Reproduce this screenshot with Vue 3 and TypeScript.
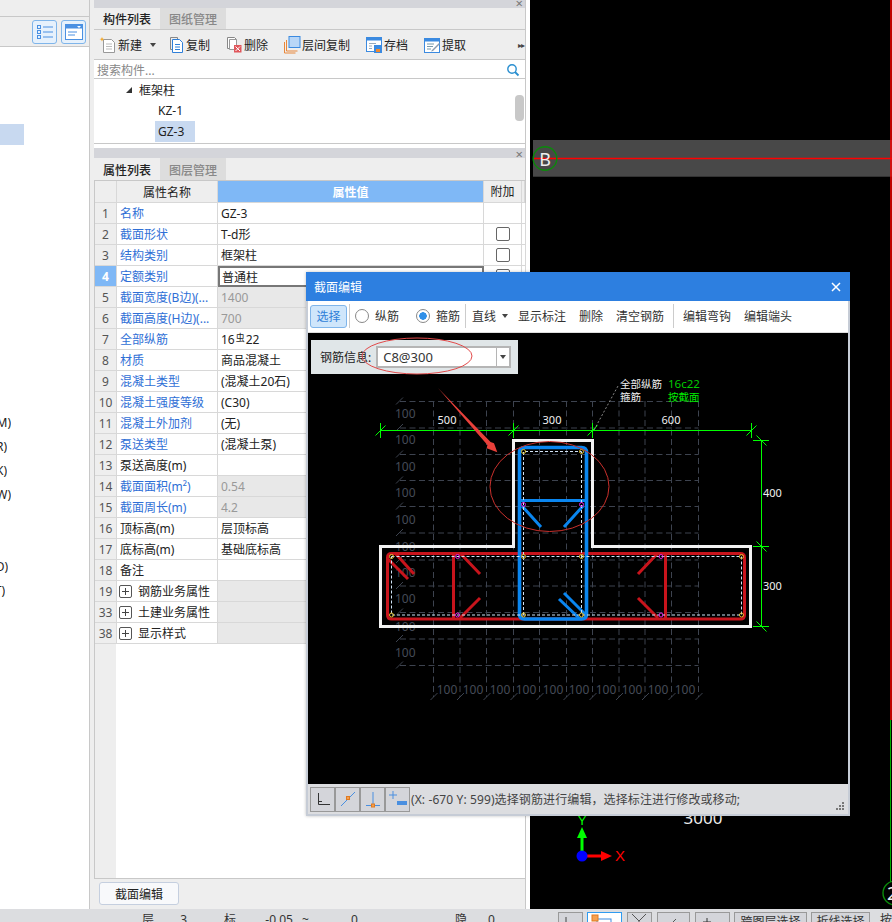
<template>
  <div class="app">
    <div class="main">
      <!-- left tree, almost all cut off by the screenshot -->
      <aside class="left">
        <div class="left-top"></div>
        <div class="left-tools">
          <button class="view-btn">
            <svg width="18" height="16" viewBox="0 0 18 16"><g fill="none" stroke="#4a90e2"><rect x="1.5" y="1.5" width="3" height="3" /><rect x="1.5" y="6.5" width="3" height="3" /><rect x="1.5" y="11.5" width="3" height="3" /><path d="M7 3h10M7 8h10M7 13h10" /></g></svg>
          </button>
          <button class="view-btn">
            <svg width="18" height="16" viewBox="0 0 18 16"><rect x=".5" y=".5" width="17" height="15" fill="#fff" stroke="#4a90e2" /><rect x=".5" y=".5" width="17" height="4" fill="#4a90e2" /><path d="M3 8h9M3 11h7" stroke="#4a90e2" /><path d="M12 2l2 2 2-2" fill="#fff" /></svg>
          </button>
        </div>
        <div class="left-body">
          <div class="left-sel"></div>
          <div class="frags">
            <div v-for="(f, i) in fragments" :key="i" class="frag" :style="{ width: f.end + 'px' }">{{ f.text }}</div>
          </div>
        </div>
      </aside>

      <section class="mid">
        <div class="grip">×</div>
        <div class="tabs">
          <div class="tab on">构件列表</div>
          <div class="tab">图纸管理</div>
        </div>
        <div class="tools">
          <div class="tool tool-new">
            <svg width="18" height="18" viewBox="0 0 18 18"><path d="M4.5 3.5h8l3 3v10h-11z" fill="#fff" stroke="#999" /><path d="M7 8h6M7 10.5h6M7 13h6" stroke="#bbb" /><path d="M3 1l.8 1.7L5.500 3l-1.700.8L3 5.500 2.200 3.800.5 3l1.700-.3z" fill="#f5a623" /></svg>
            <span>新建</span>
            <i class="caret"></i>
          </div>
          <div class="tool">
            <svg width="18" height="18" viewBox="0 0 18 18"><path d="M3.500 1.500h7v2" fill="none" stroke="#888" /><path d="M3.500 1.500v12h2" fill="none" stroke="#888" /><path d="M5.500 3.500h7l3 3v10h-10z" fill="#fff" stroke="#2f7fd8" /><path d="M8 8.500h5M8 11h5M8 13.500h5" stroke="#2f7fd8" /></svg>
            <span>复制</span>
          </div>
          <div class="tool">
            <svg width="18" height="18" viewBox="0 0 18 18"><path d="M2.500 1.500h7l2 2v9h-9z" fill="#fff" stroke="#888" /><path d="M4.500 3.500h7v10h-7z" fill="#fff" stroke="#999" /><rect x="9" y="9" width="7.500" height="7.500" fill="#e0565b" /><path d="M10.500 10.500l4.500 4.500M15 10.500l-4.500 4.500" stroke="#fff" /></svg>
            <span>删除</span>
          </div>
          <div class="tool">
            <svg width="18" height="18" viewBox="0 0 18 18"><path d="M1.500 6v11h11M3.500 4v11h11" fill="none" stroke="#e8873a" /><rect x="6" y=".5" width="11" height="11" fill="#b8d6f7" stroke="#3b8ae0" /></svg>
            <span>层间复制</span>
          </div>
          <div class="tool">
            <svg width="18" height="18" viewBox="0 0 18 18"><rect x="1.500" y="1.500" width="15" height="14" fill="#fff" stroke="#3b8ae0" /><rect x="1.500" y="1.500" width="15" height="3" fill="#3b8ae0" /><path d="M4 7.500h7M4 10h3M4 12.500h3" stroke="#9ab" /><rect x="9" y="9" width="8" height="8" fill="#3b8ae0" /><rect x="11" y="13" width="4" height="3" fill="#f08a30" /></svg>
            <span>存档</span>
          </div>
          <div class="tool">
            <svg width="18" height="18" viewBox="0 0 18 18"><rect x="1.500" y="2.500" width="15" height="14" fill="#fff" stroke="#3b8ae0" /><rect x="1.500" y="2.500" width="15" height="3" fill="#3b8ae0" /><path d="M4 8h7M4 10.500h6M4 13h4" stroke="#79a" /><path d="M9 14l7-7 1 1-7 7-2 .5z" fill="#8a9bb0" /></svg>
            <span>提取</span>
          </div>
          <div class="more">▸▸</div>
        </div>
        <div class="search">
          <span>搜索构件...</span>
          <svg width="14" height="14" viewBox="0 0 14 14"><circle cx="6" cy="6" r="4.200" fill="none" stroke="#2a8fd0" stroke-width="1.400" /><path d="M9 9l3.500 3.500" stroke="#2a8fd0" stroke-width="1.800" /></svg>
        </div>
        <div class="tree">
          <div class="tree-row tree-root"><i class="tri"></i>框架柱</div>
          <div class="tree-row tree-leaf"><span>KZ-1</span></div>
          <div class="tree-row tree-leaf"><span class="picked">GZ-3</span></div>
          <div class="thumb"></div>
        </div>

        <div class="split"></div>

        <div class="grip grip-2">×</div>
        <div class="tabs tabs-2">
          <div class="tab on">属性列表</div>
          <div class="tab">图层管理</div>
        </div>
        <div class="table">
          <div class="row head">
            <div class="c-no"></div>
            <div class="c-name">属性名称</div>
            <div class="c-val">属性值</div>
            <div class="c-add">附加</div>
            <div class="c-end"></div>
          </div>
          <div v-for="r in rows" :key="r.no" class="row">
            <div class="c-no" :class="{ 'no-on': r.no === 4 }">{{ r.no }}</div>
            <div class="c-name" :class="{ link: r.link, group: r.group }">
              <i v-if="r.group" class="plus"></i>
              <span class="ellip">{{ r.name }}</span>
            </div>
            <div class="c-val" :class="{ shaded: r.shaded, editing: r.no === 4 }">
              <template v-if="r.no === 7">16<small class="rebar">虫</small>22</template>
              <template v-else>{{ r.value }}</template>
            </div>
            <div class="c-add" :class="{ shaded: r.group }"><i v-if="r.check" class="check"></i></div>
            <div class="c-end"></div>
          </div>
          <div class="filler"><div class="filler-no"></div></div>
        </div>
        <div class="foot">
          <button class="foot-btn">截面编辑</button>
        </div>
      </section>

      <div class="gutter"></div>

      <!-- main drawing, a free canvas -->
      <div class="viewport">
        <svg class="fill" viewBox="530 0 362 909">
          <rect x="533" y="140" width="359" height="37" fill="#484848" />
          <rect x="533" y="176" width="359" height="1" fill="#333" />
          <path d="M533 158.500H892" stroke="#f00" stroke-width="1.500" />
          <path d="M891 0V720" stroke="#f00" stroke-width="1.500" />
          <path d="M890.500 720V882" stroke="#0a0" stroke-width="1" />
          <circle cx="545" cy="158.500" r="11.800" fill="none" stroke="#0a8a0a" stroke-width="1.400" />
          <text x="545" y="165.500" class="cad-b" text-anchor="middle">B</text>
          <circle cx="895" cy="893" r="12" fill="none" stroke="#0a8a0a" stroke-width="1.400" />
          <text x="887" y="900" class="cad-b">2</text>
          <text x="703" y="824" class="cad-big" text-anchor="middle">3000</text>
          <path d="M582 856V836" stroke="#0f0" stroke-width="3" />
          <path d="M582 827l5 11h-10z" fill="#0f0" />
          <text x="582" y="825" class="cad-y" text-anchor="middle">Y</text>
          <path d="M586 856h16" stroke="#f00" stroke-width="3" />
          <path d="M612 856l-11 5v-10z" fill="#f00" />
          <circle cx="582" cy="856" r="5.500" fill="#00f" />
          <text x="615" y="861" class="cad-x">X</text>
        </svg>
      </div>
    </div>

    <div class="status">
      <span class="st-a">层高:</span><span class="st-b">3</span>
      <span class="st-c">标高:</span><span class="st-d">-0.05 ~ 2.95</span><span class="st-e">0</span>
      <span class="st-f">隐藏:</span><span class="st-g">0</span>
      <button class="st-btn st-s1"><svg width="20" height="14" viewBox="0 0 20 14"><path d="M6 4v10M6 13h10" stroke="#444" fill="none" /></svg></button>
      <button class="st-btn st-s2 st-on"><svg width="30" height="14" viewBox="0 0 30 14"><rect x="8" y="6" width="14" height="10" fill="none" stroke="#3b8ae0" /><rect x="3" y="2" width="6" height="6" fill="#f5a050" stroke="#e07a20" /></svg></button>
      <button class="st-btn st-s3"><svg width="20" height="14" viewBox="0 0 20 14"><path d="M3 1l7 7 7-7M10 8v6" stroke="#555" fill="none" /></svg></button>
      <button class="st-btn st-s4"><svg width="30" height="14" viewBox="0 0 30 14"><path d="M12 12l6-6" stroke="#555" /></svg></button>
      <button class="st-btn st-s4b"><svg width="30" height="14" viewBox="0 0 30 14"><path d="M10 5v8M6 9h8" stroke="#333" /></svg></button>
      <button class="st-btn st-t1">跨图层选择</button>
      <button class="st-btn st-t2">折线选择</button>
      <span class="st-h">按</span>
    </div>

    <!-- section editor window, floating over everything -->
    <div class="dlg">
      <div class="dlg-title">
        <span>截面编辑</span>
        <svg width="10" height="10" viewBox="0 0 10 10"><path d="M1 1l8 8M9 1l-8 8" stroke="#fff" stroke-width="1.500" /></svg>
      </div>
      <div class="dlg-in">
        <div class="dlg-tools">
          <button class="sel-btn">选择</button>
          <i class="sep"></i>
          <label class="radio r1"><i class="dot"></i>纵筋</label>
          <label class="radio r2"><i class="dot dot-on"></i>箍筋</label>
          <i class="sep sep-2"></i>
          <span class="dt dt-line">直线<i class="caret"></i></span>
          <span class="dt">显示标注</span>
          <span class="dt">删除</span>
          <span class="dt">清空钢筋</span>
          <i class="sep sep-3"></i>
          <span class="dt">编辑弯钩</span>
          <span class="dt">编辑端头</span>
        </div>
        <div class="sec">
          <div class="rebar-info">
            <span class="ri-label">钢筋信息:</span>
            <div class="ri-input">C8@300</div>
            <div class="ri-arrow"><i class="caret"></i></div>
          </div>
          <svg class="fill" viewBox="308 333 540 451">
            <!-- grid -->
            <g stroke="#3d434f" stroke-dasharray="6 3.500" fill="none">
              <path v-for="y in gridY" :key="'h' + y" :d="`M400 ${y}H698.500`" />
              <path v-for="x in gridX" :key="'v' + x" :d="`M${x} 401V697`" />
            </g>
            <g stroke="#3d434f" fill="none">
              <path v-for="y in gridY" :key="'t' + y" :d="`M396 ${y + 3}l7-7`" />
              <path v-for="x in gridX" :key="'b' + x" :d="`M${x - 3} 700l7-7`" />
            </g>
            <g class="cad-grid">
              <text v-for="y in labelY" :key="'ly' + y" x="395" :y="y + 4">100</text>
              <text v-for="x in labelX" :key="'lx' + x" :x="x" y="694" text-anchor="middle">100</text>
            </g>

            <!-- dimensions -->
            <g stroke="#0f0" fill="none">
              <path d="M380.500 430.500H752" />
              <path d="M380.500 423V438M513.500 423V438M592.500 423V438M751.500 423V438" />
              <path d="M375.500 435.500l10-10M508.500 435.500l10-10M587.500 435.500l10-10M746.500 435.500l10-10" />
              <path d="M761.500 440V627" />
              <path d="M753 440.500H769M753 546.500H769M753 626.500H769" />
              <path d="M756.500 435.500l10 10M756.500 541.500l10 10M756.500 621.500l10 10" />
            </g>
            <g class="cad-dim">
              <text x="447" y="424" text-anchor="middle">500</text>
              <text x="552" y="424" text-anchor="middle">300</text>
              <text x="671" y="424" text-anchor="middle">600</text>
              <text x="763" y="497">400</text>
              <text x="763" y="590">300</text>
            </g>
            <path d="M594 430L618 386" stroke="#888" stroke-dasharray="2 2" fill="none" />
            <g class="cad-note">
              <text x="620" y="388" fill="#eee">全部纵筋</text>
              <text x="620" y="401" fill="#eee">箍筋</text>
              <text x="668" y="388" fill="#0c0" class="cad-code">16c22</text>
              <text x="668" y="401" fill="#0e0">按截面</text>
            </g>

            <!-- section outline -->
            <path d="M513.500 440.500H592.500V546.500H750.500V626.500H380.500V546.500H513.500Z" fill="none" stroke="#f2f2f2" stroke-width="3" />

            <!-- rebar -->
            <g stroke="#c8141c" stroke-width="3" fill="none">
              <path d="M391.500 553.500H740.500Q744.500 553.500 744.500 557.500V615Q744.500 619 740.500 619H391.500Q387.500 619 387.500 615V557.500Q387.500 553.500 391.500 553.500Z" />
              <path d="M453.500 553.500V619M665.500 553.500V619" />
              <path d="M388 559l20 20M395 553l19 21M460 553l20 21M460 618l20-20M658 553l-20 21M658 618l-20-20" />
            </g>
            <g stroke="#0a86f0" stroke-width="3" fill="none">
              <path d="M524.500 447.500H581.500Q586.500 447.500 586.500 452.500V614Q586.500 619 581.500 619H524.500Q519.500 619 519.500 614V452.500Q519.500 447.500 524.500 447.500Z" stroke-width="3.600" />
              <path d="M519.500 500.500H586.500" />
              <path d="M522 506l19 21M583 506l-19 21M564 593l21 21M559 599l21 20" />
            </g>
            <g stroke="#cfe2f5" stroke-dasharray="3 2" fill="none">
              <path d="M391.500 556.500H741.500V615H391.500Z" />
              <path d="M523.500 615V451.500H581.500V615" />
            </g>
            <g fill="none" stroke="#e0c030" stroke-width="1">
              <circle v-for="p in yellowPts" :key="p.join()" :cx="p[0]" :cy="p[1]" r="2" />
            </g>
            <g fill="none" stroke="#e020e0" stroke-width="1">
              <circle v-for="p in pinkPts" :key="p.join()" :cx="p[0]" :cy="p[1]" r="2" />
            </g>

            <!-- markup somebody drew on the screenshot -->
            <ellipse cx="549.500" cy="486.500" rx="59.500" ry="45" fill="none" stroke="#c9302c" />
            <ellipse cx="417" cy="356" rx="55" ry="18" fill="none" stroke="#e24a4a" />
            <path d="M438 388L490.600 441.900L494 443.300L497.300 452.300L486.700 448.300L487.400 445.100Z" fill="#e8403a" />
          </svg>
        </div>
        <div class="dlg-status">
          <button class="ds-btn"><svg width="18" height="18" viewBox="0 0 18 18"><path d="M4.500 3v11.500H16M4.500 11.500H8" fill="none" stroke="#333" /></svg></button>
          <button class="ds-btn"><svg width="18" height="18" viewBox="0 0 18 18"><path d="M2 16L16 2" stroke="#4a8fe0" /><rect x="7.500" y="6.500" width="3" height="3" fill="#f5a050" stroke="#e07a20" /></svg></button>
          <button class="ds-btn"><svg width="18" height="18" viewBox="0 0 18 18"><path d="M9 2v14M2 15.500h14" stroke="#4a8fe0" /><rect x="7.500" y="14" width="3" height="3" fill="#f5a050" stroke="#e07a20" /></svg></button>
          <button class="ds-btn"><svg width="20" height="18" viewBox="0 0 20 18"><path d="M5 1v8M1 5h8" stroke="#4a8fe0" /><rect x="9" y="11" width="10" height="4" fill="#4a8fe0" /></svg></button>
          <span class="ds-text">(X: -670 Y: 599)选择钢筋进行编辑，选择标注进行修改或移动;</span>
          <svg class="ds-grip" width="10" height="10" viewBox="0 0 10 10"><path d="M7 1h2v2H7zM4 4h2v2H4zM7 4h2v2H7zM1 7h2v2H1zM4 7h2v2H4zM7 7h2v2H7z" fill="#777" /></svg>
        </div>
      </div>
    </div>
  </div>
</template>

<script setup lang="ts">
interface PropRow {
  no: number
  name: string
  value?: string
  link?: boolean
  shaded?: boolean
  check?: boolean
  group?: boolean
}

const fragments = [
  { text: '(GM)', end: 11 },
  { text: '(GR)', end: 7 },
  { text: '(GK)', end: 7 },
  { text: '(GW)', end: 11 },
  { text: '', end: 0 },
  { text: '', end: 0 },
  { text: '(GD)', end: 8 },
  { text: '(GT)', end: 5 },
]

const rows: PropRow[] = [
  { no: 1, name: '名称', value: 'GZ-3', link: true },
  { no: 2, name: '截面形状', value: 'T-d形', link: true, check: true },
  { no: 3, name: '结构类别', value: '框架柱', link: true, check: true },
  { no: 4, name: '定额类别', value: '普通柱', link: true, check: true },
  { no: 5, name: '截面宽度(B边)(...', value: '1400', link: true, shaded: true },
  { no: 6, name: '截面高度(H边)(...', value: '700', link: true, shaded: true },
  { no: 7, name: '全部纵筋', link: true },
  { no: 8, name: '材质', value: '商品混凝土', link: true },
  { no: 9, name: '混凝土类型', value: '(混凝土20石)', link: true },
  { no: 10, name: '混凝土强度等级', value: '(C30)', link: true },
  { no: 11, name: '混凝土外加剂', value: '(无)', link: true },
  { no: 12, name: '泵送类型', value: '(混凝土泵)', link: true },
  { no: 13, name: '泵送高度(m)' },
  { no: 14, name: '截面面积(m²)', value: '0.54', link: true, shaded: true },
  { no: 15, name: '截面周长(m)', value: '4.2', link: true, shaded: true },
  { no: 16, name: '顶标高(m)', value: '层顶标高' },
  { no: 17, name: '底标高(m)', value: '基础底标高' },
  { no: 18, name: '备注' },
  { no: 19, name: '钢筋业务属性', group: true, shaded: true },
  { no: 33, name: '土建业务属性', group: true, shaded: true },
  { no: 38, name: '显示样式', group: true, shaded: true },
]

const gridY = [401.5, 428, 454.5, 480.5, 506.5, 533, 560, 586, 612.5, 639, 665.5]
const gridX = [433.5, 460, 486.5, 513.5, 539.5, 566.5, 592.5, 619, 645, 671.5, 698.5]
const labelY = [414, 440, 467, 493, 520, 547, 573, 599, 627, 653]
const labelX = [447, 473, 500, 526, 553, 579, 606, 632, 658, 685]

const yellowPts = [
  [391.5, 556.5], [391.5, 615], [523.5, 451.5], [581.5, 451.5], [523.5, 556.5],
  [581.5, 556.5], [523.5, 615], [581.5, 615], [741.5, 556.5], [741.5, 615],
]
const pinkPts = [
  [457.5, 556.5], [457.5, 615], [523.5, 504.5], [581.5, 504.5], [661, 556.5], [661, 615],
]
</script>

<style>
body {
  margin: 0;
  background: #fff;
}
</style>

<style scoped>
.app {
  position: relative;
  width: 892px;
  height: 922px;
  overflow: hidden;
  display: flex;
  flex-direction: column;
  background: #eee;
  color: #222;
  font: 12px "Noto Sans", "Noto Sans CJK SC", sans-serif;
}
.app i { font-style: normal; }
button {
  font: inherit;
  color: inherit;
  padding: 0;
  box-sizing: border-box;
}
.main {
  flex: 1;
  min-height: 0;
  display: flex;
}

/* left */
.left {
  width: 90px;
  margin-right: 4px;
  box-sizing: border-box;
  border-right: 1px solid #c8c8c8;
  display: flex;
  flex-direction: column;
}
.left-top {
  height: 16px;
  border-bottom: 1px solid #c8c8c8;
}
.left-tools {
  height: 29px;
  border-bottom: 1px solid #c8c8c8;
  display: flex;
  align-items: center;
  gap: 4px;
  padding-left: 32px;
}
.view-btn {
  width: 25px;
  height: 24px;
  display: flex;
  align-items: center;
  justify-content: center;
  background: #e6f1fc;
  border: 1px solid #7fb5ea;
  border-radius: 3px;
}
.left-body {
  flex: 1;
  background: #fff;
  padding-top: 77px;
}
.left-sel {
  width: 24px;
  height: 21px;
  background: #c8d9f0;
}
.frags {
  margin-top: 266px;
}
.frag {
  height: 24px;
  line-height: 24px;
  display: flex;
  justify-content: flex-end;
  overflow: hidden;
  white-space: nowrap;
}

/* middle */
.mid {
  width: 432px;
  box-sizing: border-box;
  border-right: 1px solid #c8c8c8;
  display: flex;
  flex-direction: column;
}
.grip {
  height: 8px;
  flex: none;
  background: #d4d5da;
  color: #777;
  font-size: 13px;
  line-height: 6px;
  text-align: right;
  padding-right: 2px;
}
.grip-2 {
  height: 10px;
  line-height: 12px;
}
.tabs {
  height: 22px;
  flex: none;
  box-sizing: border-box;
  display: flex;
  border-bottom: 1px solid #c8c8c8;
  background: #eee;
}
.tabs-2 {
  height: 23px;
}
.tabs-2 .tab {
  padding-top: 2px;
  box-sizing: border-box;
}
.tab {
  width: 66px;
  display: flex;
  align-items: center;
  justify-content: center;
  color: #888;
  font-weight: 500;
  background: #ddd;
}
.tab.on {
  color: #222;
  background: #eee;
}
.tools {
  height: 30px;
  flex: none;
  box-sizing: border-box;
  border-bottom: 1px solid #c8c8c8;
  display: flex;
  align-items: center;
  gap: 15px;
  padding-left: 5px;
  position: relative;
}
.tool {
  display: flex;
  align-items: center;
  gap: 1px;
}
.tool-new {
  margin-right: -4px;
}
.tool-new .caret {
  margin-left: 7px;
}
.caret {
  display: inline-block;
  border: 3px solid transparent;
  border-top: 4px solid #444;
  border-bottom: 0;
}
.more {
  margin-left: auto;
  margin-right: 1px;
  font-size: 8px;
  letter-spacing: -1px;
  color: #444;
}
.search {
  height: 19px;
  flex: none;
  box-sizing: border-box;
  background: #fff;
  border-bottom: 1px solid #c8c8c8;
  display: flex;
  align-items: center;
  justify-content: space-between;
  padding: 1px 5px 0 3px;
  color: #888;
}
.tree {
  height: 65px;
  flex: none;
  box-sizing: border-box;
  background: #fff;
  border-bottom: 1px solid #c8c8c8;
  position: relative;
}
.tree-row {
  height: 21px;
  display: flex;
  align-items: center;
}
.tree-root {
  padding-left: 32px;
}
.tri {
  width: 0;
  height: 0;
  margin-right: 7px;
  border-left: 6px solid transparent;
  border-bottom: 6px solid #333;
}
.tree-leaf {
  padding-left: 61px;
}
.tree-leaf span {
  padding: 0 3px;
  line-height: 21px;
}
.picked {
  width: 34px;
  background: #c8d9f0;
}
.thumb {
  position: absolute;
  left: 421px;
  top: 16px;
  width: 9px;
  height: 26px;
  border-radius: 4px;
  background: #c8c8c8;
}
.split {
  height: 4px;
  flex: none;
  background: #fff;
}

/* property table */
.table {
  flex: 1;
  min-height: 0;
  display: flex;
  flex-direction: column;
  background: #fff;
  border-left: 1px solid #c8c8c8;
  border-bottom: 1px solid #c8c8c8;
}
.row {
  height: 21px;
  flex: none;
  display: grid;
  grid-template-columns: 22px 101px 266px 38px 3px;
}
.row > div {
  box-sizing: border-box;
  border-right: 1px solid #d8d8d8;
  border-bottom: 1px solid #d8d8d8;
  line-height: 22px;
  padding-left: 3px;
  white-space: nowrap;
  overflow: hidden;
}
.head {
  height: 22px;
}
.head > div {
  text-align: center;
  padding-left: 0 !important;
  background: #eee;
  line-height: 23px !important;
}
.head .c-no {
  background: #eef0f5;
}
.head .c-val {
  background: #7fb8f6;
  color: #fff;
  font-weight: 700;
}
.row > .c-no {
  padding-left: 0;
  text-align: center;
  background: #eee;
  color: #555;
}
.row > .no-on {
  background: #7fb8f6;
  color: #fff;
  font-weight: 700;
}
.link {
  color: #2f6fd6;
}
.group {
  display: flex;
  align-items: center;
  padding-left: 2px !important;
}
.group .ellip {
  padding-top: 2px;
}
.plus {
  flex: none;
  box-sizing: border-box;
  width: 13px;
  height: 13px;
  margin-right: 6px;
  border: 1px solid #555;
  border-radius: 2px;
  background:
    linear-gradient(#444, #444) center / 7px 1px no-repeat,
    linear-gradient(#444, #444) center / 1px 7px no-repeat;
}
.row > .shaded {
  background: #e8e8e8;
  color: #999;
}
.row > .editing {
  border: 2px solid #777;
  line-height: 19px;
  padding-left: 2px;
}
.rebar {
  font-size: 9px;
  position: relative;
  top: -3px;
  margin: 0 1px;
}
.c-add {
  display: flex;
  align-items: center;
  justify-content: center;
  padding-left: 0 !important;
}
.check {
  box-sizing: border-box;
  width: 14px;
  height: 14px;
  border: 1px solid #666;
  border-radius: 2px;
  background: #fff;
}
.filler {
  flex: 1;
}
.filler-no {
  width: 21px;
  height: 100%;
  background: #eee;
}
.foot {
  height: 30px;
  flex: none;
  padding: 3px 5px;
  box-sizing: border-box;
}
.foot-btn {
  width: 80px;
  height: 23px;
  background: #f8f9fb;
  border: 1px solid #c5cfdf;
  border-radius: 3px;
}
.gutter {
  width: 4px;
  background: #fff;
}
.viewport {
  flex: 1;
  position: relative;
  background: #000;
}
.fill {
  position: absolute;
  inset: 0;
  width: 100%;
  height: 100%;
  display: block;
}
.cad-b {
  fill: #eee;
  font: 18px "Noto Sans", sans-serif;
}
.cad-big {
  fill: #eee;
  font: 17px "Noto Sans", sans-serif;
}
.cad-y {
  fill: #0f0;
  font: 13px "Liberation Sans", sans-serif;
}
.cad-x {
  fill: #f00;
  font: 15px "Liberation Sans", sans-serif;
}

/* status bar, cut by the window edge */
.status {
  height: 13px;
  flex: none;
  position: relative;
  display: flex;
  background: #dcdde0;
  overflow: hidden;
  color: #333;
  padding-top: 3px;
  box-sizing: border-box;
  line-height: 16px;
  align-items: flex-start;
}
.st-a { margin-left: 142px; }
.st-b { margin-left: 17px; }
.st-c { margin-left: 37px; }
.st-d { margin-left: 20px; word-spacing: 6px; }
.st-e { margin-left: 26px; }
.st-f { margin-left: 97px; }
.st-g { margin-left: 12px; }
.st-btn {
  flex: none;
  height: 24px;
  margin-left: 4px;
  background: #d4d5da;
  border: 1px solid #999;
  display: flex;
  justify-content: center;
  line-height: 18px;
}
.st-s1 { width: 25px; margin-left: 63px; }
.st-s2 { width: 35px; }
.st-s3 { width: 25px; margin-left: 5px; }
.st-s4 { width: 33px; margin-left: 5px; }
.st-s4b { width: 35px; margin-left: 5px; }
.st-t1 { width: 73px; }
.st-t2 { width: 59px; }
.st-on {
  background: #fff;
  border-color: #2f9bf0;
}
.st-h { margin-left: 10px; }

/* dialog */
.dlg {
  position: absolute;
  left: 306px;
  top: 272px;
  width: 544px;
  height: 544px;
  display: flex;
  flex-direction: column;
  box-shadow: 0 0 3px rgba(0, 0, 0, 0.25);
}
.dlg-title {
  height: 29px;
  flex: none;
  background: #2d7fe0;
  color: #fff;
  display: flex;
  align-items: center;
  justify-content: space-between;
  padding: 0 9px 0 8px;
}
.dlg-in {
  flex: 1;
  min-height: 0;
  display: flex;
  flex-direction: column;
  box-sizing: border-box;
  border: 2px solid #c6ccd6;
  border-top: 0;
}
.dlg-tools {
  height: 32px;
  flex: none;
  background: #fff;
  display: flex;
  align-items: center;
  padding: 0 0 1px 2px;
  border-bottom: 1px solid #ddd;
  box-sizing: border-box;
  color: #333;
}
.sel-btn {
  width: 37px;
  height: 23px;
  background: #cfe6fb;
  border: 1px solid #7fb5ea;
  border-radius: 3px;
  color: #2f7fd8;
}
.sep {
  width: 1px;
  height: 24px;
  margin: 0 5px 0 2px;
  background: #ccc;
}
.radio {
  display: flex;
  align-items: center;
  gap: 6px;
  margin-right: 17px;
}
.r2 {
  margin-right: 3px;
}
.dot {
  box-sizing: border-box;
  width: 14px;
  height: 14px;
  border: 1px solid #888;
  border-radius: 50%;
  background: #fff;
}
.dot-on {
  background: radial-gradient(circle, #2f8fe8 0 3.5px, #fff 4px);
}
.sep-2 {
  margin-right: 6px;
}
.dt {
  margin-right: 13px;
}
.dt-line {
  margin-right: 10px;
  display: flex;
  align-items: center;
  gap: 6px;
}
.sep-3 {
  margin: 0 9px 0 -4px;
}
.sec {
  flex: 1;
  min-height: 0;
  position: relative;
  background: #000;
  padding: 7px 0 0 3px;
  box-sizing: border-box;
}
.rebar-info {
  width: 207px;
  height: 34px;
  background: #e0e6e8;
  display: flex;
  align-items: center;
  padding-left: 9px;
  box-sizing: border-box;
  color: #222;
}
.ri-input {
  width: 121px;
  height: 22px;
  margin-left: 5px;
  box-sizing: border-box;
  background: #fff;
  border: 2px solid #b5b5b5;
  border-right: 1px solid #b5b5b5;
  line-height: 18px;
  padding-left: 5px;
  color: #333;
  font-size: 13px;
}
.ri-arrow {
  width: 14px;
  height: 22px;
  box-sizing: border-box;
  background: #fff;
  border: 2px solid #b5b5b5;
  border-left: 0;
  display: flex;
  align-items: center;
  justify-content: center;
}
.cad-grid {
  fill: #454b57;
  font: 12px "Noto Sans", sans-serif;
}
.cad-dim {
  fill: #f0f0f0;
  font: 11px "Noto Sans", sans-serif;
}
.cad-note {
  font: 10.5px "Noto Sans", "Noto Sans CJK SC", sans-serif;
}
.cad-code {
  font-size: 11.5px;
}
.dlg-status {
  height: 30px;
  flex: none;
  background: #dcdde0;
  display: flex;
  align-items: center;
  padding-left: 2px;
  position: relative;
  color: #444;
}
.ds-btn {
  width: 25px;
  height: 25px;
  display: flex;
  align-items: center;
  justify-content: center;
  background: #d4d5da;
  border: 1px solid #999;
}
.ds-text {
  white-space: nowrap;
  margin-left: 1px;
  font-size: 12px;
  letter-spacing: 0.11px;
}
.ds-grip {
  position: absolute;
  right: 3px;
  bottom: 3px;
}
</style>
